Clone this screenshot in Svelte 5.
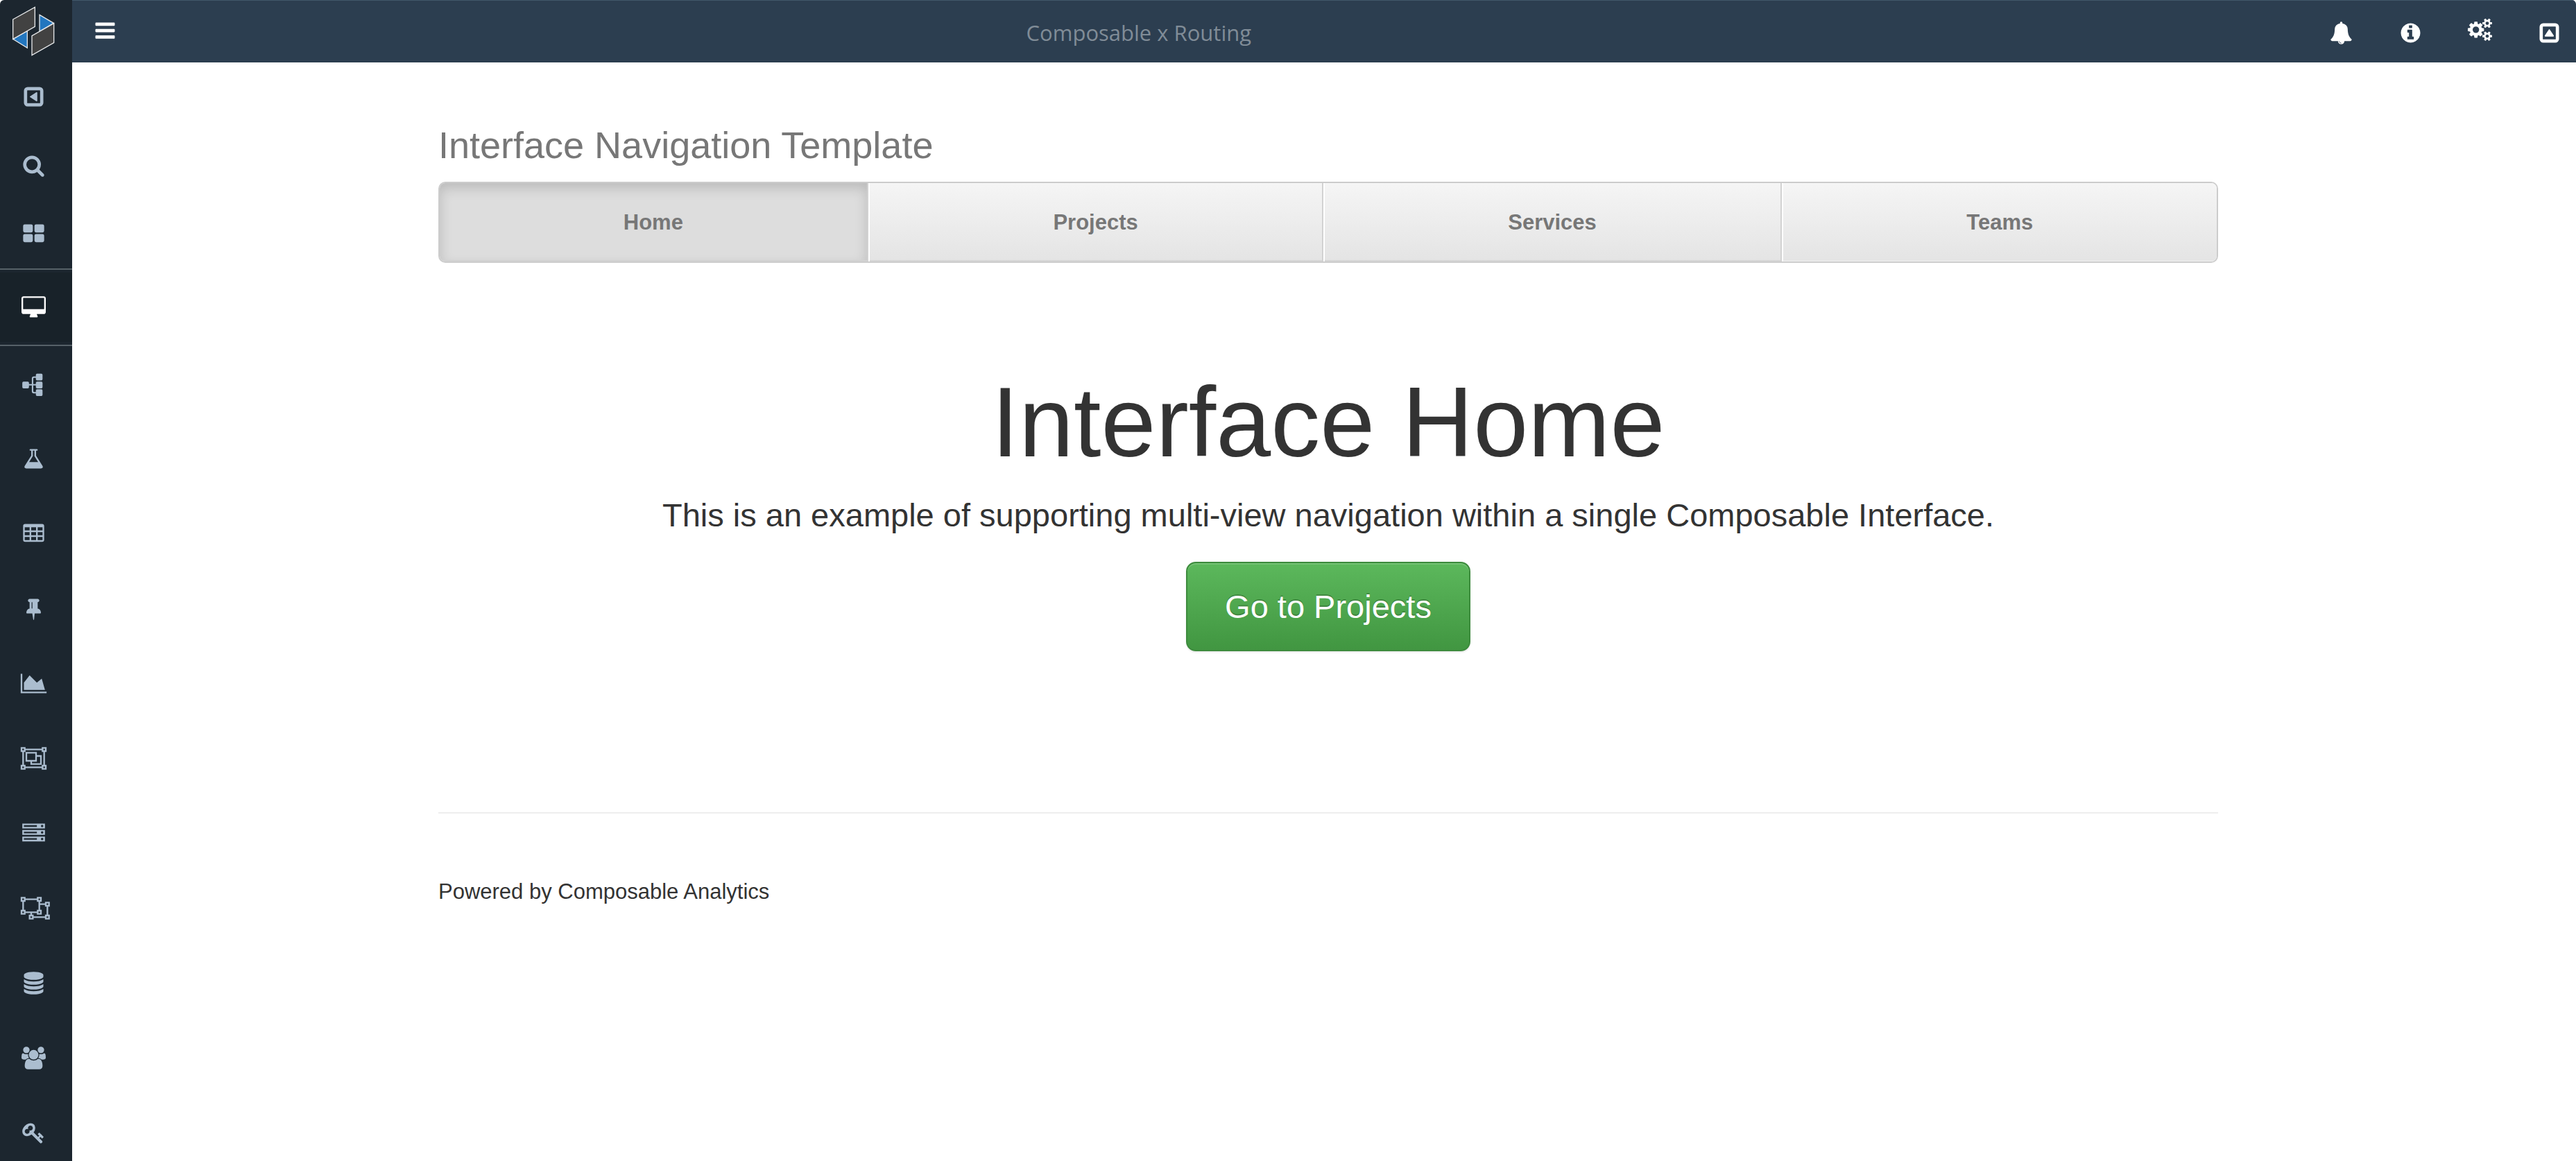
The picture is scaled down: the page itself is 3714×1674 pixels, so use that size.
<script>
  const square = 'M416 128h960q119 0 203.500 84.500t84.500 203.500v960q0 119-84.500 203.500t-203.500 84.500h-960q-119 0-203.500-84.500t-84.500-203.500v-960q0-119 84.500-203.500t203.500-84.500zm0 256q-32 0-32 32v960q0 32 32 32h960q32 0 32-32v-960q0-32-32-32z';
  const icons = {
    collapse: square + 'M1088 548q64-44 96 20v656q-32 64-96 20l-480-324q-38-24 0-48z',
    expand: square + 'M548 1088q-44 64 20 96h656q64-32 20-96l-324-480q-24-38-48 0z',
    bars: 'M192 80h1408q64 0 64 64v128q0 64-64 64h-1408q-64 0-64-64v-128q0-64 64-64zm0 506h1408q64 0 64 64v128q0 64-64 64h-1408q-64 0-64-64v-128q0-64 64-64zm0 506h1408q64 0 64 64v128q0 64-64 64h-1408q-64 0-64-64v-128q0-64 64-64z',
    search: 'M1216 832q0-185-131.500-316.500t-316.500-131.500-316.500 131.500-131.500 316.500 131.500 316.500 316.500 131.500 316.500-131.500 131.500-316.500zm512 832q0 52-38 90t-90 38q-54 0-90-38l-343-342q-179 124-399 124-143 0-273.500-55.500t-225-150-150-225-55.500-273.500 55.500-273.500 150-225 225-150 273.500-55.500 273.500 55.500 225 150 150 225 55.500 273.500q0 220-124 399l343 343q37 37 37 90z',
    grid: 'M192 128h512q128 0 128 128v384q0 128-128 128h-512q-128 0-128-128v-384q0-128 128-128zm896 0h512q128 0 128 128v384q0 128-128 128h-512q-128 0-128-128v-384q0-128 128-128zm-896 768h512q128 0 128 128v384q0 128-128 128h-512q-128 0-128-128v-384q0-128 128-128zm896 0h512q128 0 128 128v384q0 128-128 128h-512q-128 0-128-128v-384q0-128 128-128z',
    desktop: 'M1728 992v-832q0-13-9.500-22.500t-22.500-9.500h-1600q-13 0-22.500 9.500t-9.500 22.500v832q0 13 9.500 22.500t22.500 9.500h1600q13 0 22.500-9.500t9.500-22.500zm128-832v1088q0 66-47 113t-113 47h-544q0 37 16 77.500t32 71 16 43.500q0 26-19 45t-45 19h-512q-26 0-45-19t-19-45q0-14 16-44t32-70 16-78h-544q-66 0-113-47t-47-113v-1088q0-66 47-113t113-47h1600q66 0 113 47t47 113z',
    flow: 'M96 720h336q96 0 96 96v96h224v-448q0-160 160-160h160v-120q0-96 96-96h336q96 0 96 96v340q0 96-96 96h-336q-96 0-96-96v-110h-140q-64 0-64 64v434h204v-96q0-96 96-96h336q96 0 96 96v340q0 96-96 96h-336q-96 0-96-96v-134h-204v448q0 64 64 64h140v-116q0-96 96-96h336q96 0 96 96v340q0 96-96 96h-336q-96 0-96-96v-114h-160q-160 0-160-160v-462h-224v134q0 96-96 96h-336q-96 0-96-96v-340q0-96 96-96z',
    flask: 'M1591 1448q56 89 21.500 152.500t-140.500 63.500h-1152q-106 0-140.500-63.500t21.500-152.500l503-793v-399h-64q-26 0-45-19t-19-45 19-45 45-19h512q26 0 45 19t19 45-19 45-45 19h-64v399zm-779-725l-272 429h712l-272-429-20-31v-436h-128v436z',
    table: 'M224 128h1344q160 0 160 160v1088q0 160-160 160h-1344q-160 0-160-160v-1088q0-160 160-160zM192 384v256h384v-256zM704 384v256h384v-256zM1216 384v256h384v-256zM192 768v256h384v-256zM704 768v256h384v-256zM1216 768v256h384v-256zM192 1152v256h384v-256zM704 1152v256h384v-256zM1216 1152v256h384v-256z',
    pin: 'M800 864v-448q0-14-9-23t-23-9-23 9-9 23v448q0 14 9 23t23 9 23-9 9-23zm672 352q0 26-19 45t-45 19h-429l-51 483q-2 12-10.500 20.500t-20.500 8.500h-1q-27 0-32-27l-76-485h-404q-26 0-45-19t-19-45q0-123 78.500-221.500t177.500-98.500v-512q-52 0-90-38t-38-90 38-90 90-38h640q52 0 90 38t38 90-38 90-90 38v512q99 0 177.500 98.500t78.500 221.500z',
    chart: 'M1920 1536v128h-2048v-1536h128v1408h1920zm-384-1024l256 896h-1664v-576l448-576 576 576z',
    group: 'M-128 0h384v128h1280v-128h384v384h-128v1024h128v384h-384v-128h-1280v128h-384v-384h128v-1024h-128zM0 128v128h128v-128zM1664 128v128h128v-128zM0 1536v128h128v-128zM1664 1536v128h128v-128zM256 256v128h-128v1024h128v128h1280v-128h128v-1024h-128v-128zM256 384h896v256h384v768h-896v-256h-384zM384 512v512h640v-512zM1152 768v384h-384v128h640v-512z',
    server: 'M0 128h1792v384h-1792zM128 256v128h1024v-128zM1472 320a96 96 0 1 0 192 0a96 96 0 1 0-192 0zM0 640h1792v384h-1792zM128 768v128h1024v-128zM1472 832a96 96 0 1 0 192 0a96 96 0 1 0-192 0zM0 1152h1792v384h-1792zM128 1280v128h1024v-128zM1472 1344a96 96 0 1 0 192 0a96 96 0 1 0-192 0z',
    ungroup: 'M-128 0h384v128h896v-128h384v384h-128v128h384v-128h384v384h-128v640h128v384h-384v-128h-896v128h-384v-384h128v-128h-384v128h-384v-384h128v-640h-128zM0 128v128h128v-128zM1280 128v128h128v-128zM0 1152v128h128v-128zM1280 1152v128h128v-128zM1920 512v128h128v-128zM1920 1536v128h128v-128zM640 1536v128h128v-128zM256 256v128h-128v640h128v128h896v-128h128v-640h-128v-128zM1408 640v384h128v384h-384v-128h-384v128h128v128h896v-128h128v-640h-128v-128z',
    database: 'M896 768q237 0 443-43t325-127v170q0 69-103 128t-280 93.500-385 34.500-385-34.500-280-93.500-103-128v-170q119 84 325 127t443 43zm0 768q237 0 443-43t325-127v170q0 69-103 128t-280 93.500-385 34.500-385-34.500-280-93.500-103-128v-170q119 84 325 127t443 43zm0-384q237 0 443-43t325-127v170q0 69-103 128t-280 93.500-385 34.500-385-34.500-280-93.500-103-128v-170q119 84 325 127t443 43zm0-1152q208 0 385 34.500t280 93.500 103 128v128q0 69-103 128t-280 93.500-385 34.500-385-34.500-280-93.500-103-128v-128q0-69 103-128t280-93.500 385-34.500z',
    users: 'M529 896q-162 5-265 128h-134q-82 0-138-40.500t-56-118.500q0-353 124-353 6 0 43.500 21t97.500 42.500 119 21.500q67 0 133-23-5 37-5 66 0 139 81 256zm1071 637q0 120-73 189.500t-194 69.500h-874q-121 0-194-69.500t-73-189.500q0-53 3.500-103.500t14-109 26.500-108.500 43-97.500 62-81 85.500-53.500 111.500-20q10 0 43 21.500t73 48 107 48 135 21.500 135-21.500 107-48 73-48 43-21.500q61 0 111.500 20t85.500 53.500 62 81 43 97.500 26.500 108.500 14 109 3.500 103.500zm-1024-1277q0 106-75 181t-181 75-181-75-75-181 75-181 181-75 181 75 75 181zm704 384q0 159-112.500 271.500t-271.500 112.500-271.500-112.500-112.500-271.500 112.500-271.500 271.500-112.500 271.500 112.500 112.500 271.500zm576 225q0 78-56 118.500t-138 40.500h-134q-103-123-265-128 81-117 81-256 0-29-5-66 66 23 133 23 59 0 119-21.500t97.500-42.500 43.500-21q124 0 124 353zm-128-609q0 106-75 181t-181 75-181-75-75-181 75-181 181-75 181 75 75 181z',
    key: 'M832 512q0-80-56-136t-136-56-136 56-56 136q0 42 19 83-41-19-83-19-80 0-136 56t-56 136 56 136 136 56 136-56 56-136q0-42-19-83 41 19 83 19 80 0 136-56t56-136zm851 704q0 17-49 66t-66 49q-9 0-28.500-16t-36.500-33-38.500-40-24.500-26l-96 96 220 220q28 28 28 68 0 42-39 81t-81 39q-40 0-68-28l-671-671q-176 131-365 131-163 0-265.500-102.500t-102.500-265.500q0-160 95-313t248-248 313-95q163 0 265.500 102.500t102.500 265.500q0 189-131 365l355 355 96-96q-3-3-26-24.500t-40-38.500-33-36.500-16-28.500q0-17 49-66t66-49q13 0 23 10 6 6 46 44.500t82 79.500 86.500 86 73 78 28.500 41z',
    bell: 'M912 1696q0-16-16-16-59 0-101.500-42.500t-42.500-101.500q0-16-16-16t-16 16q0 73 51.500 124.500t124.500 51.500q16 0 16-16zm816-288q0 52-38 90t-90 38h-448q0 106-75 181t-181 75-181-75-75-181h-448q-52 0-90-38t-38-90q50-42 91-88t85-119.500 74.500-158.500 50-206 19.500-260q0-152 117-282.500t307-158.500q-8-19-8-39 0-40 28-68t68-28 68 28 28 68q0 20-8 39 190 28 307 158.500t117 282.500q0 139 19.500 260t50 206 74.500 158.500 85 119.500 91 88z',
    info: 'M1152 1376v-160q0-14-9-23t-23-9h-96v-512q0-14-9-23t-23-9h-320q-14 0-23 9t-9 23v160q0 14 9 23t23 9h96v320h-96q-14 0-23 9t-9 23v160q0 14 9 23t23 9h448q14 0 23-9t9-23zm-128-896v-160q0-14-9-23t-23-9h-192q-14 0-23 9t-9 23v160q0 14 9 23t23 9h192q14 0 23-9t9-23zm640 416q0 209-103 385.500t-279.500 279.500-385.500 103-385.500-103-279.500-279.500-103-385.500 103-385.500 279.500-279.500 385.500-103 385.500 103 279.500 279.500 103 385.500z',
    cogs: 'M832 640q0-106-75-181t-181-75-181 75-75 181 75 181 181 75 181-75 75-181zm768 512q0-52-38-90t-90-38-90 38-38 90q0 53 37.500 90.500t90.500 37.500 90.500-37.500 37.500-90.500zm0-1024q0-52-38-90t-90-38-90 38-38 90q0 53 37.500 90.500t90.500 37.500 90.500-37.500 37.500-90.500zm-384 421v185q0 10-7 19.500t-16 10.500l-155 24q-11 35-32 76 34 48 90 115 7 11 7 20 0 12-7 19-23 30-82.500 89.500t-78.500 59.500q-11 0-21-7l-115-90q-37 19-77 31-11 108-23 155-7 24-30 24h-186q-11 0-20-7.500t-10-17.500l-23-153q-34-10-75-31l-118 89q-7 7-20 7-11 0-21-8-144-133-144-160 0-9 7-19 10-14 41-53t47-61q-23-44-35-82l-152-24q-10-1-17-9.500t-7-19.500v-185q0-10 7-19.500t16-10.500l155-24q11-35 32-76-34-48-90-115-7-11-7-20 0-12 7-20 22-30 82-89t79-59q11 0 21 7l115 90q34-18 77-32 11-108 23-154 7-24 30-24h186q11 0 20 7.500t10 17.500l23 153q34 10 75 31l118-89q8-7 20-7 11 0 21 8 144 133 144 160 0 8-7 19-12 16-42 54t-45 60q23 48 34 82l152 23q10 2 17 10.500t7 19.500zm640 533v140q0 16-149 31-12 27-30 52 51 113 51 138 0 4-4 7-122 71-124 71-8 0-46-47t-52-68q-20 2-30 2t-30-2q-14 21-52 68t-46 47q-2 0-124-71-4-3-4-7 0-25 51-138-18-25-30-52-149-15-149-31v-140q0-16 149-31 13-29 30-52-51-113-51-138 0-4 4-7 4-2 35-20t59-34 30-16q8 0 46 46.500t52 67.500q20-2 30-2t30 2q51-71 92-112l6-2q4 0 124 70 4 3 4 7 0 25-51 138 17 23 30 52 149 15 149 31zm0-1024v140q0 16-149 31-12 27-30 52 51 113 51 138 0 4-4 7-122 71-124 71-8 0-46-47t-52-68q-20 2-30 2t-30-2q-14 21-52 68t-46 47q-2 0-124-71-4-3-4-7 0-25 51-138-18-25-30-52-149-15-149-31v-140q0-16 149-31 13-29 30-52-51-113-51-138 0-4 4-7 4-2 35-20t59-34 30-16q8 0 46 46.500t52 67.500q20-2 30-2t30 2q51-71 92-112l6-2q4 0 124 70 4 3 4 7 0 25-51 138 17 23 30 52 149 15 149 31z'
  };

  const tools = [
    { icon: 'collapse', label: 'Collapse sidebar' },
    { icon: 'search', label: 'Search' },
    { icon: 'grid', label: 'Dashboards' }
  ];
  const sections = [
    { icon: 'flow', label: 'DataFlows' },
    { icon: 'flask', label: 'Experiments' },
    { icon: 'table', label: 'Tables' },
    { icon: 'pin', label: 'Pinned' },
    { icon: 'chart', label: 'Charts' },
    { icon: 'group', label: 'Models' },
    { icon: 'server', label: 'Servers' },
    { icon: 'ungroup', label: 'Objects' },
    { icon: 'database', label: 'Databases' },
    { icon: 'users', label: 'Groups' },
    { icon: 'key', label: 'Keys' }
  ];
  const actions = [
    { icon: 'bell', label: 'Notifications' },
    { icon: 'info', label: 'Information' },
    { icon: 'cogs', label: 'Settings' },
    { icon: 'expand', label: 'Hide header' }
  ];
  const tabs = ['Home', 'Projects', 'Services', 'Teams'];
  let current = $state('Home');
</script>

{#snippet glyph(name)}
  <svg class="icon" viewBox="-9 -9 1810 1810" aria-hidden="true"><path fill-rule="evenodd" d={icons[name]} /></svg>
{/snippet}

<div class="app">
  <aside class="sidebar">
    <a class="logo" href="#top" aria-label="Composable">
      <svg viewBox="0 0 312 270" aria-hidden="true">
        <g stroke="#e4e6e8" stroke-width="4">
          <path fill="#2276bf" d="M56 169L118 133V207ZM171 64L232 100L171 136Z" />
          <path fill="#424242" d="M56 84L151 31V115L56 169ZM138 155L233 101V185L138 239Z" />
        </g>
      </svg>
    </a>
    <nav class="rail" aria-label="Sections">
      {#each tools as item}
        <button class="tool" aria-label={item.label}>{@render glyph(item.icon)}</button>
      {/each}
      <a class="active" href="#interfaces" aria-label="Interfaces" aria-current="page">{@render glyph('desktop')}</a>
      {#each sections as item}
        <a class="section" href="#{item.icon}" aria-label={item.label}>{@render glyph(item.icon)}</a>
      {/each}
    </nav>
  </aside>

  <div class="page">
    <header class="topbar">
      <button class="menu" aria-label="Menu">{@render glyph('bars')}</button>
      <div class="title">Composable x Routing</div>
      <div class="actions">
        {#each actions as item}
          <button aria-label={item.label}>{@render glyph(item.icon)}</button>
        {/each}
      </div>
    </header>

    <main>
      <div class="container">
        <h3>Interface Navigation Template</h3>
        <nav class="tabs" aria-label="Views">
          {#each tabs as tab}
            <a href="#{tab.toLowerCase()}" class:selected={tab === current} onclick={() => (current = tab)}>{tab}</a>
          {/each}
        </nav>
        <section class="hero">
          <h1>Interface Home</h1>
          <p>This is an example of supporting multi-view navigation within a single Composable Interface.</p>
          <a class="go" href="#projects">Go to Projects</a>
        </section>
        <hr />
        <footer>Powered by Composable Analytics</footer>
      </div>
    </main>
  </div>
</div>

<style>
  :global(body) {
    background: #fff;
    color: #333;
    font-family: 'Liberation Sans', Arial, sans-serif;
    font-size: 31px;
    line-height: 45px;
  }
  .app {
    display: flex;
    height: 100vh;
    overflow: hidden;
    border-radius: 6px 6px 0 0;
  }
  a {
    text-decoration: none;
  }
  button {
    padding: 0;
    border: 0;
    background: none;
    color: inherit;
    cursor: pointer;
  }
  .icon {
    display: block;
    width: 33px;
    height: 33px;
    overflow: visible;
    fill: currentColor;
  }
  .sidebar {
    flex: none;
    width: 104px;
    overflow: hidden;
    background: #1c262f;
    color: #abbdcf;
  }
  .logo,
  .logo svg {
    display: block;
    width: 104px;
    height: 90px;
  }
  .rail {
    display: flex;
    flex-direction: column;
  }
  .rail > * {
    display: flex;
    flex: none;
    box-sizing: border-box;
    align-items: center;
    justify-content: center;
    width: 100%;
    padding-right: 8px;
    color: inherit;
  }
  .rail .tool {
    height: 99px;
  }
  .rail .active {
    height: 112px;
    border: solid #566168;
    border-width: 2px 0;
    background: linear-gradient(#182229, #182229) center / 100% 100px no-repeat;
    color: #fff;
  }
  .rail .section {
    height: 108px;
  }
  .page {
    display: flex;
    flex: 1;
    flex-direction: column;
    min-width: 0;
  }
  .topbar {
    display: flex;
    flex: none;
    box-sizing: border-box;
    align-items: center;
    height: 90px;
    padding-top: 4px;
    border-top: 1px solid #41586a;
    border-bottom: 1px solid #263a4b;
    background: #2c3e50;
    color: #fff;
  }
  .menu {
    display: flex;
    justify-content: center;
    width: 94px;
  }
  .title {
    flex: 1;
    padding-left: 35.5%;
    color: #808c97;
    font-family: 'Segoe UI', 'Open Sans', sans-serif;
    white-space: nowrap;
  }
  .actions {
    display: flex;
    gap: 22px;
  }
  .actions button {
    display: flex;
    justify-content: center;
    width: 78px;
  }
  main {
    padding: 74px 0 0 12px;
  }
  .container {
    max-width: 2566px;
    margin: 0 auto;
  }
  h3 {
    margin: 0 0 8px;
    color: #777;
    font-size: 54px;
    font-weight: 400;
    line-height: 90px;
  }
  .tabs {
    display: flex;
    overflow: hidden;
    border: 2px solid #ccc;
    border-radius: 10px;
  }
  .tabs a {
    flex: 1 1 auto;
    padding: 34px 0;
    border-right: 2px solid #d2d2d2;
    border-left: 2px solid #fff;
    background: linear-gradient(#f5f5f5, #e4e4e4);
    box-shadow: inset 0 -2px #d6d6d6;
    color: #777;
    font-weight: 700;
    text-align: center;
  }
  .tabs a:first-child {
    border-left: 0;
  }
  .tabs a:last-child {
    border-right: 0;
    box-shadow: inset 0 -1px #f2f2f2;
  }
  .tabs .selected {
    background: #ddd;
    box-shadow: inset 0 -2px #d2d2d2, inset 0 7px 18px rgb(0 0 0 / 16%);
  }
  .hero {
    display: flex;
    flex-direction: column;
    align-items: center;
    margin: 159px 0 232px;
    text-align: center;
  }
  h1 {
    margin: 0 0 29px;
    font-size: 142px;
    font-weight: 400;
    line-height: 142px;
  }
  p {
    margin: 0 0 34px;
    font-size: 47px;
    line-height: 67px;
  }
  .go {
    padding: 40px 54px;
    border: 2px solid #3d8b3d;
    border-radius: 14px;
    background: linear-gradient(#5cb85c, #419641);
    box-shadow: inset 0 2px rgb(255 255 255 / 15%), 0 2px 2px rgb(0 0 0 / 8%);
    color: #fff;
    font-size: 47px;
    line-height: 45px;
    text-shadow: 0 -2px 0 rgb(0 0 0 / 20%);
  }
  hr {
    margin: 0 0 90px;
    border: 0;
    border-top: 2px solid #eee;
  }
</style>
